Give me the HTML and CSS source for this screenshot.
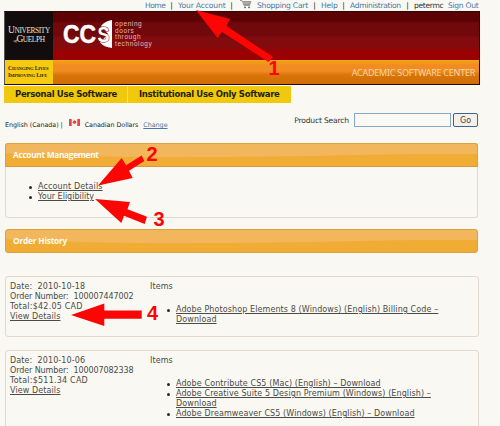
FILE: index.html
```html
<!DOCTYPE html>
<html lang="en">
<head>
<meta charset="utf-8">
<title>Academic Software Center</title>
<link rel="stylesheet" href="styles.css">
</head>
<body>
<div class="page">
  <nav class="account-nav">
    <a class="n-home">Home</a><i>|</i>
    <a class="n-account">Your Account</a><i>|</i>
    <svg class="cart" viewBox="0 0 12 9"><path d="M0 .5h2l2 5h6M2.5 1.5H11L10 4.5H4M5 1.5v3M7 1.5v3M9 1.5v3M3 3h7" fill="none" stroke="#777" stroke-width=".7"/><circle cx="5" cy="7.3" r=".9" fill="#555"/><circle cx="9" cy="7.3" r=".9" fill="#555"/></svg>
    <a class="n-cart">Shopping Cart</a><i>|</i>
    <a class="n-help">Help</a><i>|</i>
    <a class="n-admin">Administration</a><i>|</i>
    <span class="n-user">petermc</span>
    <a class="n-out">Sign Out</a>
  </nav>

  <header class="banner">
    <div class="crest"><span>U<small>NIVERSITY</small></span><span class="second"><em>of</em>G<small>UELPH</small></span></div>
    <div class="brand">
      <svg class="ccs" viewBox="0 0 50 28">
        <path d="M49 0v28Q41 27 37 22.5L45 14 38 6Q42 1 49 0Z" fill="#fff"/>
        <text x="0" y="23" textLength="33" lengthAdjust="spacingAndGlyphs">CC</text>
        <text class="s-letter" x="34.5" y="22" textLength="12" lengthAdjust="spacingAndGlyphs">S</text>
      </svg>
      <p class="tagline">opening<br>doors<br>through<br>technology</p>
    </div>
    <div class="motto"><span>C<small>HANGING</small> L<small>IVES</small></span><span>I<small>MPROVING</small> L<small>IFE</small></span></div>
    <div class="center-name">ACADEMIC SOFTWARE CENTER</div>
  </header>

  <div class="tabs"><a class="tab personal">Personal Use Software</a><a class="tab institutional">Institutional Use Only Software</a></div>

  <div class="tools">
    <div class="locale">
      <span>English (Canada) |</span>
      <svg class="flag" viewBox="0 0 11 8"><path fill="#f7eeee" d="M0 0h11v7H0z"/><path fill="#df4a43" d="M0 0h2.7v7H0zM8.3 0H11v7H8.3zM5.5 1l.7 1 1-.2-.3 1.3.8.6-1.7 1.1H5L3.3 3.7l.8-.6-.3-1.3 1 .2z"/></svg>
      <span class="currency">Canadian Dollars</span>
      <a class="change">Change</a>
    </div>
    <form class="search"><label for="q">Product Search</label><input id="q" type="text"><button type="button">Go</button></form>
  </div>

  <section class="panel">
    <h2 class="bar">
      <svg class="wave" viewBox="0 0 474 24" preserveAspectRatio="none"><path d="M0 10C80 14 150 15 240 14S390 10 474 11V24H0Z"/></svg>
      <span>Account Management</span></h2>
    <ul class="account-links"><li><a>Account Details</a></li><li><a class="eligibility">Your Eligibility</a></li></ul>
  </section>

  <h2 class="bar history">
    <svg class="wave" viewBox="0 0 474 24" preserveAspectRatio="none"><path d="M0 10C80 14 150 15 240 14S390 10 474 11V24H0Z"/></svg>
    <span>Order History</span></h2>

  <section class="order first">
    <div class="summary">Date:&nbsp; 2010-10-18<br><span class="number">Order Number:&nbsp; 100007447002</span><br><span class="total">Total:$42.05 CAD</span><br><a>View Details</a></div>
    <div class="items">Items
      <ul><li><a>Adobe Photoshop Elements 8 (Windows) (English) Billing Code –<br>Download</a></li></ul>
    </div>
  </section>

  <section class="order second-order">
    <div class="summary">Date:&nbsp; 2010-10-06<br><span class="number">Order Number:&nbsp; 100007082338</span><br><span class="total">Total:$511.34 CAD</span><br><a>View Details</a></div>
    <div class="items">Items
      <ul><li><a>Adobe Contribute CS5 (Mac) (English) – Download</a></li>
      <li><a>Adobe Creative Suite 5 Design Premium (Windows) (English) –<br>Download</a></li>
      <li><a>Adobe Dreamweaver CS5 (Windows) (English) – Download</a></li></ul>
    </div>
  </section>

  <svg class="callouts" viewBox="0 0 500 426">
    <path d="M196 10 230 19 226.5 26 273 57 268.5 62 222 32 217.5 38Z"/>
    <path d="M98 185.5 121.7 158 126 165.3 141.7 155.5 144.3 161 129 170.7 132.7 178Z"/>
    <path d="M95 199 130 202 127.5 209.3 147 216.7 144.7 224 124 215.7 121.3 223Z"/>
    <path d="M71 315 104.3 303.5V310.5H141.7V318.7H104.3V326Z"/>
    <text x="268.5" y="75">1</text>
    <text x="146.5" y="161">2</text>
    <text x="153.5" y="225.5">3</text>
    <text x="147" y="320">4</text>
  </svg>
</div>
</body>
</html>
```
FILE: styles.css
```css
* { box-sizing: border-box; }
body { margin: 0; background: #f9f8f2; color: #4b4b48; font: 8px/10px "DejaVu Sans", sans-serif; }
.page { position: relative; width: 500px; height: 426px; overflow: hidden; padding: 0 21px 0 5px; }
h2, p, ul, form { margin: 0; padding: 0; }

.account-nav { height: 11px; padding-left: 140px; display: flex; line-height: 12px; font-size: 7.6px; color: #333; white-space: nowrap; }
.account-nav a { color: #4c78a8; }
.account-nav i { width: 13px; text-align: center; font-style: normal; color: #222; }
.account-nav .n-home { width: 20px; letter-spacing: -.5px; }
.n-account { width: 47px; letter-spacing: -.15px; }
.cart { width: 12px; height: 9px; margin: 0 5px 0 2px; }
.n-cart { width: 51px; letter-spacing: -.25px; }
.n-help { width: 16px; letter-spacing: -.2px; }
.n-admin { width: 51px; letter-spacing: -.35px; }
.n-user { width: 34px; letter-spacing: -.35px; }
.n-out { letter-spacing: -.3px; }

.banner { margin-left: -1px; width: 476px; height: 74px; border: 1px solid #2c0707; border-left-color: #555; display: grid; grid-template: 48px 24px / 48px 1fr; }
.crest { background: #120d0c; color: #e8e4df; font: 9.5px/9px "Liberation Serif", serif; display: flex; flex-direction: column; align-items: center; padding-top: 14px; white-space: nowrap; letter-spacing: -.45px; }
.crest span { display: block; height: 9px; }
.crest small { font-size: 7.4px; letter-spacing: -.4px; }
.crest em { font-size: 5px; }
.brand { background: linear-gradient(#5c0204 0 9px, #71080b 11px 23px, #820b0e 26px 34px, #9a0103 39px); display: flex; padding: 8px 0 0 10px; }
.ccs { width: 50px; height: 28px; font: bold 25px "Liberation Sans", sans-serif; fill: #fff; stroke: #fff; stroke-width: .5px; }
.ccs path { stroke: none; }
.ccs .s-letter { font-size: 22px; stroke: #790b0d; stroke-width: 1.2px; paint-order: stroke; }
.tagline { margin: 0 0 0 2px; padding-top: 1px; font: 6.5px/6.7px "Liberation Sans", sans-serif; letter-spacing: .6px; color: #e7b9b4; }
.motto { background: #f4cb10; color: #2c230b; font: bold 5.7px/6px "Liberation Serif", serif; padding: 5px 0 0 3px; display: flex; flex-direction: column; white-space: nowrap; letter-spacing: -.15px; }
.motto small { font-size: 4.6px; }
.center-name { background: linear-gradient(#f39a18 0 2px, #f08c22 4px 10px, #d97508 14px, #cf6d05); border-top: 1px solid #eda719; text-align: right; padding: 5px 4px 0 0; font: 9px/14px "Noto Sans", sans-serif; letter-spacing: -.25px; color: #f8d5a4; }

.tabs { display: flex; margin: 1px 0 0 -1px; width: 287px; height: 17px; background: #f0c80d; color: #251f05; font: bold 8.5px/17px "DejaVu Sans", sans-serif; white-space: nowrap; }
.tab { padding-left: 11px; letter-spacing: -.32px; }
.personal { width: 124px; border-right: 1px solid #f5de7c; }

.tools { display: flex; justify-content: space-between; height: 15px; margin-top: 10px; white-space: nowrap; }
.locale { display: flex; padding-top: 7px; font-size: 6.4px; color: #272727; letter-spacing: -.05px; }
.flag { width: 11px; height: 8px; margin: -1px 5px 0 6px; }
.currency { margin-right: 5px; }
.change { color: #4c78a8; text-decoration: underline; }
.search { display: flex; }
.search label { line-height: 15px; margin-right: 5px; font-size: 7.6px; letter-spacing: -.18px; color: #333; }
.search input { width: 97px; height: 14px; border: 1px solid #87a7ca; background: #faf9f3; padding: 0; }
.search button { width: 25px; height: 14px; margin: 0 1px 0 2px; padding: 0; border: 1px solid #3d648e; border-radius: 2px; background: #f5f1e8; color: #444; font: 8px/11px "DejaVu Sans", sans-serif; }

.panel { width: 473px; height: 75px; margin-top: 15px; border: 1px solid #dedbd4; border-top: 0; border-radius: 3px; }
.bar { position: relative; width: 473px; height: 24px; padding-left: 7px; border: 1px solid #dda03e; border-radius: 3px; background: #f2b65c; color: #fffdf3; font: bold 8.3px/21px "Open Sans", sans-serif; overflow: hidden; }
.panel .bar { margin-left: -1px; border-bottom-color: #d69a42; border-radius: 3px 3px 0 0; }
.bar span { position: relative; letter-spacing: -.3px; }
.wave { position: absolute; inset: 0; width: 100%; height: 100%; fill: #f1ac35; }
.bar.history { margin-top: 11px; }
.bar.history span { letter-spacing: -.2px; }
.account-links { padding: 15px 0 0 32px; letter-spacing: .13px; }
.eligibility { letter-spacing: 0; }
li { list-style: none; display: flex; }
li::before { content: ""; width: 3px; height: 3px; margin: 4px 6px 0 -9px; border-radius: 50%; background: #292929; flex: none; }
li a, .summary a { text-decoration: underline; white-space: nowrap; }

.order { width: 474px; height: 61px; border: 1px solid #dfd9d0; border-radius: 3px; display: flex; padding: 5px 0 0 4px; white-space: nowrap; letter-spacing: .1px; }
.first { margin-top: 23px; }
.second-order { margin-top: 13px; height: 90px; }
.summary { width: 140px; }
.number { letter-spacing: -.1px; }
.total { letter-spacing: .22px; }
.items ul { padding: 13px 0 0 26px; }
.callouts { position: absolute; left: 0; top: 0; width: 500px; height: 426px; fill: #fb0505; font: bold 20px "Liberation Sans", sans-serif; }
```
